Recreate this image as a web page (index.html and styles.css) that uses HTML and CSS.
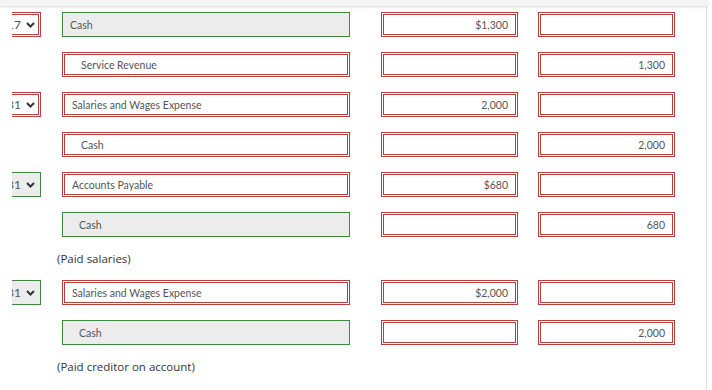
FILE: index.html
```html
<!DOCTYPE html>
<html lang="en">
<head>
  <meta charset="UTF-8" />
  <title>Journal entries</title>
  <link rel="stylesheet" href="styles.css">
</head>
<body>
  <div class="topbar"></div>
  <div class="sheet">
    <div class="entry">
      <div class="date"><div class="sel bad"><span>17</span><svg width="9" height="6" viewBox="0 0 9 6"><path d="M1 1l3.5 3.5 3.5-3.5" fill="none" stroke="#333" stroke-width="2"/></svg></div></div>
      <div class="field acct ok">Cash</div>
      <div class="field amt dr bad">$1,300</div>
      <div class="field amt cr bad"></div>
    </div>
    <div class="entry">
      <div class="date"></div>
      <div class="field acct credit bad">Service Revenue</div>
      <div class="field amt dr bad"></div>
      <div class="field amt cr bad">1,300</div>
    </div>
    <div class="entry">
      <div class="date"><div class="sel bad"><span>31</span><svg width="9" height="6" viewBox="0 0 9 6"><path d="M1 1l3.5 3.5 3.5-3.5" fill="none" stroke="#333" stroke-width="2"/></svg></div></div>
      <div class="field acct bad">Salaries and Wages Expense</div>
      <div class="field amt dr bad">2,000</div>
      <div class="field amt cr bad"></div>
    </div>
    <div class="entry">
      <div class="date"></div>
      <div class="field acct credit bad">Cash</div>
      <div class="field amt dr bad"></div>
      <div class="field amt cr bad">2,000</div>
    </div>
    <div class="entry">
      <div class="date"><div class="sel ok"><span>31</span><svg width="9" height="6" viewBox="0 0 9 6"><path d="M1 1l3.5 3.5 3.5-3.5" fill="none" stroke="#333" stroke-width="2"/></svg></div></div>
      <div class="field acct bad">Accounts Payable</div>
      <div class="field amt dr bad">$680</div>
      <div class="field amt cr bad"></div>
    </div>
    <div class="entry">
      <div class="date"></div>
      <div class="field acct credit ok">Cash</div>
      <div class="field amt dr bad"></div>
      <div class="field amt cr bad">680</div>
    </div>
    <p class="note">(Paid salaries)</p>
    <div class="entry">
      <div class="date"><div class="sel ok"><span>31</span><svg width="9" height="6" viewBox="0 0 9 6"><path d="M1 1l3.5 3.5 3.5-3.5" fill="none" stroke="#333" stroke-width="2"/></svg></div></div>
      <div class="field acct bad">Salaries and Wages Expense</div>
      <div class="field amt dr bad">$2,000</div>
      <div class="field amt cr bad"></div>
    </div>
    <div class="entry">
      <div class="date"></div>
      <div class="field acct credit ok">Cash</div>
      <div class="field amt dr bad"></div>
      <div class="field amt cr bad">2,000</div>
    </div>
    <p class="note">(Paid creditor on account)</p>
  </div>
</body>
</html>
```

FILE: styles.css
```css
body {
  margin: 0;
  font-family: Lato, "Liberation Sans", sans-serif;
  background: #fff;
}
.topbar {
  height: 6px;
  width: 708px;
  background: #f4f4f4;
  box-shadow: 0 1px 3px rgba(0,0,0,0.15);
  position: relative;
}
.sheet {
  width: 707px;
  height: 384px;
  border-right: 1px solid #dcdcdc;
  padding: 6px 0 0 12px;
  box-sizing: border-box;
  display: flex;
  flex-direction: column;
  gap: 15px;
}
.entry {
  display: flex;
  height: 25px;
}
.date {
  width: 29px;
  flex-shrink: 0;
  overflow: hidden;
  display: flex;
  justify-content: flex-end;
}
.sel {
  flex-shrink: 0;
  width: 50px;
  box-sizing: border-box;
  display: flex;
  align-items: center;
  justify-content: flex-end;
  gap: 5px;
  padding-right: 3px;
  font-size: 12px;
  color: #555;
}
.field {
  box-sizing: border-box;
  flex-shrink: 0;
  display: flex;
  align-items: center;
  padding: 0 7px;
  font-size: 10.5px;
  color: #555;
}
.acct {
  width: 288px;
  margin-left: 21px;
}
.acct.credit {
  padding-left: 16px;
}
.amt {
  width: 137px;
  justify-content: flex-end;
}
.dr {
  margin-left: 31px;
}
.cr {
  margin-left: 20px;
}
.bad {
  border: 3px double #b5403d;
  background: #fff;
}
.ok {
  border: 1px solid #3d8a3d;
  background: #ececec;
}
.sel.ok {
  padding-right: 5px;
}
.note {
  margin: 0 0 0 45px;
  height: 13px;
  line-height: 13px;
  font-family: "Open Sans", sans-serif;
  font-size: 11.5px;
  color: #333;
}
```
